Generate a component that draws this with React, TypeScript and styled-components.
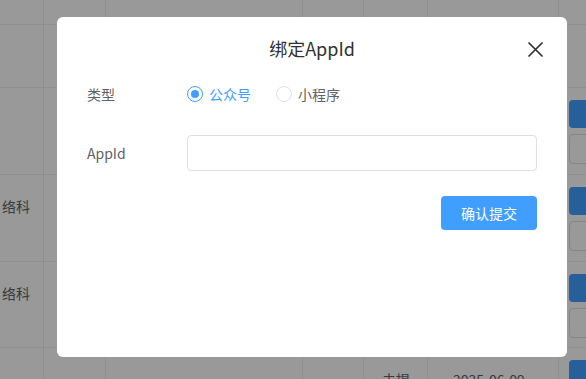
import React, { useState } from 'react'
import styled, { createGlobalStyle } from 'styled-components'

const GlobalStyle = createGlobalStyle`
  html, body {
    margin: 0;
    padding: 0;
  }
  body {
    font-family: "Noto Sans CJK SC", "Noto Sans", sans-serif;
    background: #fff;
    width: 586px;
    height: 379px;
    overflow: hidden;
  }
  * {
    box-sizing: border-box;
  }
`

const COLUMNS = '44px 62px 197px 61px 64px 131px 1fr'
const ROW_HEIGHTS = [25, 63, 87, 87, 86, 60]

interface RowData {
  name?: string
  status?: string
  date?: string
  actions?: boolean
}

const rows: RowData[] = [
  {},
  {},
  { actions: true },
  { name: '络科', actions: true },
  { name: '络科', actions: true },
  { status: '未提', date: '2025-06-09', actions: true }
]

export default function App() {
  const [type, setType] = useState('mp')
  const [appId, setAppId] = useState('')

  return (
    <Page>
      <GlobalStyle />
      <Table>
        {rows.map((row, i) => (
          <Row key={i} $height={ROW_HEIGHTS[i]}>
            <Cell $pl={2}>{row.name}</Cell>
            <Cell />
            <Cell />
            <Cell />
            <Cell $pl={18}>{row.status}</Cell>
            <Cell $pl={25}>{row.date}</Cell>
            <ActionCell>
              {row.actions && (
                <>
                  <PrimaryMini />
                  <PlainMini />
                </>
              )}
            </ActionCell>
          </Row>
        ))}
      </Table>

      <Overlay>
        <Dialog>
          <Header>
            <Title>绑定AppId</Title>
            <CloseButton aria-label='关闭'>
              <svg width='15' height='15' viewBox='0 0 15 15'>
                <path
                  d='M1 1 L14 14 M14 1 L1 14'
                  stroke='#303133'
                  strokeWidth='1.7'
                  strokeLinecap='round'
                />
              </svg>
            </CloseButton>
          </Header>
          <Body>
            <FormItem>
              <Label>类型</Label>
              <RadioGroup>
                <RadioOption onClick={() => setType('mp')}>
                  <RadioCircle $checked={type === 'mp'} />
                  <RadioText $checked={type === 'mp'}>公众号</RadioText>
                </RadioOption>
                <RadioOption onClick={() => setType('mini')}>
                  <RadioCircle $checked={type === 'mini'} />
                  <RadioText $checked={type === 'mini'}>小程序</RadioText>
                </RadioOption>
              </RadioGroup>
            </FormItem>
            <FormItem $top={23}>
              <Label>AppId</Label>
              <Input value={appId} onChange={(e) => setAppId(e.target.value)} />
            </FormItem>
            <Footer>
              <SubmitButton>确认提交</SubmitButton>
            </Footer>
          </Body>
        </Dialog>
      </Overlay>
    </Page>
  )
}

const Page = styled.div`
  position: relative;
  width: 586px;
  height: 379px;
  overflow: hidden;
  background: #fff;
`

const Table = styled.div`
  display: flex;
  flex-direction: column;
  width: 100%;
`

const Row = styled.div<{ $height: number }>`
  display: grid;
  grid-template-columns: ${COLUMNS};
  height: ${(p) => p.$height}px;
  flex-shrink: 0;
  border-bottom: 1px solid #ebeef5;
`

const Cell = styled.div<{ $pl?: number }>`
  border-right: 1px solid #ebeef5;
  padding: 21px 0 0 ${(p) => p.$pl ?? 0}px;
  font-size: 14px;
  line-height: 20px;
  color: #606266;
  white-space: nowrap;
  overflow: hidden;
`

const ActionCell = styled.div`
  display: flex;
  flex-direction: column;
  gap: 6px;
  padding: 12px 0 0 10px;
  overflow: hidden;
`

const PrimaryMini = styled.div`
  width: 60px;
  height: 28px;
  border-radius: 4px;
  background: #409eff;
  flex-shrink: 0;
`

const PlainMini = styled.div`
  width: 60px;
  height: 30px;
  border-radius: 4px;
  border: 1px solid #dcdfe6;
  background: #fff;
  flex-shrink: 0;
`

const Overlay = styled.div`
  position: absolute;
  inset: 0;
  background: rgba(0, 0, 0, 0.4);
  padding: 17px 0 0 57px;
`

const Dialog = styled.div`
  width: 510px;
  height: 340px;
  background: #fff;
  border-radius: 6px;
  display: flex;
  flex-direction: column;
`

const Header = styled.div`
  position: relative;
  padding: 19px 30px 15px;
  text-align: center;
`

const Title = styled.span`
  font-size: 18px;
  line-height: 24px;
  color: #303133;
`

const CloseButton = styled.button`
  position: absolute;
  top: 25px;
  right: 24px;
  width: 15px;
  height: 15px;
  padding: 0;
  border: none;
  background: none;
  display: flex;
  cursor: pointer;
`

const Body = styled.div`
  padding: 0 30px;
`

const FormItem = styled.div<{ $top?: number }>`
  display: flex;
  align-items: center;
  height: 36px;
  margin-top: ${(p) => p.$top ?? 0}px;
`

const Label = styled.label`
  width: 100px;
  flex-shrink: 0;
  font-size: 14px;
  color: #606266;
`

const RadioGroup = styled.div`
  display: flex;
  align-items: center;
  gap: 25px;
`

const RadioOption = styled.div`
  display: inline-flex;
  align-items: center;
  gap: 6px;
  cursor: pointer;
`

const RadioCircle = styled.span<{ $checked: boolean }>`
  position: relative;
  width: 16px;
  height: 16px;
  border-radius: 50%;
  border: 1px solid ${(p) => (p.$checked ? '#409eff' : '#dcdfe6')};
  background: #fff;

  &::after {
    content: '';
    display: ${(p) => (p.$checked ? 'block' : 'none')};
    position: absolute;
    top: 3px;
    left: 3px;
    width: 8px;
    height: 8px;
    border-radius: 50%;
    background: #409eff;
  }
`

const RadioText = styled.span<{ $checked: boolean }>`
  font-size: 14px;
  color: ${(p) => (p.$checked ? '#409eff' : '#606266')};
`

const Input = styled.input`
  width: 350px;
  height: 36px;
  border: 1px solid #dcdfe6;
  border-radius: 4px;
  padding: 0 15px;
  font-size: 14px;
  color: #606266;
  outline: none;
  font-family: inherit;
`

const Footer = styled.div`
  display: flex;
  justify-content: flex-end;
  margin-top: 25px;
`

const SubmitButton = styled.button`
  width: 96px;
  height: 34px;
  border: none;
  border-radius: 4px;
  background: #409eff;
  color: #fff;
  font-size: 14px;
  font-family: inherit;
  cursor: pointer;
`
